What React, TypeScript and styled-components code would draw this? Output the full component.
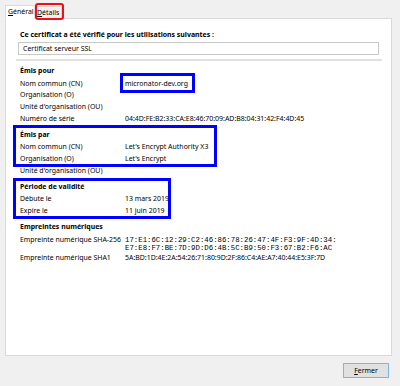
import styled, { createGlobalStyle } from 'styled-components';

const GlobalStyle = createGlobalStyle`
  html, body {
    margin: 0;
    padding: 0;
    background: #f0f0f0;
  }
  body {
    font-family: "Noto Sans", "Open Sans", sans-serif;
    font-size: 6.95px;
    color: #000;
  }
`;

type Field = { label: string; value: string; mono?: string[] };
type Group = { title: string; fields: Field[] };

const groups: Group[] = [
  {
    title: 'Émis pour',
    fields: [
      { label: 'Nom commun (CN)', value: 'micronator-dev.org' },
      { label: 'Organisation (O)', value: '' },
      { label: "Unité d'organisation (OU)", value: '' },
      { label: 'Numéro de série', value: '04:4D:FE:B2:33:CA:E8:46:70:09:AD:B8:04:31:42:F4:4D:45' },
    ],
  },
  {
    title: 'Émis par',
    fields: [
      { label: 'Nom commun (CN)', value: "Let's Encrypt Authority X3" },
      { label: 'Organisation (O)', value: "Let's Encrypt" },
      { label: "Unité d'organisation (OU)", value: '' },
    ],
  },
  {
    title: 'Période de validité',
    fields: [
      { label: 'Débute le', value: '13 mars 2019' },
      { label: 'Expire le', value: '11 juin 2019' },
    ],
  },
  {
    title: 'Empreintes numériques',
    fields: [
      {
        label: 'Empreinte numérique SHA-256',
        value: '',
        mono: [
          '17:E1:6C:12:29:C2:46:86:78:26:47:4F:F3:9F:4D:34:',
          'E7:E8:F7:BE:7D:9D:D6:4B:5C:B9:50:F3:67:B2:F6:AC',
        ],
      },
      { label: 'Empreinte numérique SHA1', value: '5A:BD:1D:4E:2A:54:26:71:80:9D:2F:86:C4:AE:A7:40:44:E5:3F:7D' },
    ],
  },
];

// annotation boxes drawn over the screenshot
const marks = [
  { left: 120, top: 73, width: 75, height: 20, color: '#0000ff', thick: 3, radius: 0 },
  { left: 13, top: 125, width: 204, height: 42, color: '#0000ff', thick: 3, radius: 0 },
  { left: 13, top: 178, width: 158, height: 41, color: '#0000ff', thick: 3, radius: 0 },
  { left: 35, top: 3, width: 29, height: 17, color: '#ee1111', thick: 2.5, radius: 3 },
];

function App() {
  return (
    <Page>
      <GlobalStyle />
      <TabBar>
        <Tab $active>
          <u>G</u>énéral
        </Tab>
        <Tab>
          <u>D</u>étails
        </Tab>
      </TabBar>
      <Panel>
        <Heading>Ce certificat a été vérifié pour les utilisations suivantes :</Heading>
        <UsageBox>Certificat serveur SSL</UsageBox>
        <Divider />
        {groups.map((g) => (
          <Section key={g.title}>
            <SectionTitle>{g.title}</SectionTitle>
            {g.fields.map((f) => (
              <Row key={f.label} $tall={!!f.mono}>
                <Label>{f.label}</Label>
                {f.mono ? (
                  <Mono>
                    {f.mono.map((line) => (
                      <div key={line}>{line}</div>
                    ))}
                  </Mono>
                ) : (
                  <Value>{f.value}</Value>
                )}
              </Row>
            ))}
          </Section>
        ))}
      </Panel>
      <Footer>
        <Button>
          <u>F</u>ermer
        </Button>
      </Footer>
      {marks.map((m, i) => (
        <Mark
          key={i}
          $color={m.color}
          $thick={m.thick}
          $radius={m.radius}
          style={{ left: m.left, top: m.top, width: m.width, height: m.height }}
        />
      ))}
    </Page>
  );
}

const Page = styled.div`
  position: relative;
  width: 400px;
  height: 386px;
  display: flex;
  flex-direction: column;
  overflow: hidden;
`;

const TabBar = styled.div`
  display: flex;
  align-items: flex-end;
  height: 14px;
  padding: 4px 0 0 5px;
  position: relative;
  z-index: 1;
`;

const Tab = styled.div<{ $active?: boolean }>`
  width: ${({ $active }) => ($active ? '30px' : '28px')};
  height: ${({ $active }) => ($active ? '14px' : '12px')};
  line-height: ${({ $active }) => ($active ? '12px' : '11px')};
  padding: 0 0 0 2px;
  box-sizing: border-box;
  background: ${({ $active }) => ($active ? '#fff' : '#f0f0f0')};
  border: 1px solid #d9d9d9;
  border-bottom: ${({ $active }) => ($active ? '1px solid #fff' : 'none')};
  margin-left: ${({ $active }) => ($active ? '0' : '-1px')};
  margin-bottom: ${({ $active }) => ($active ? '-1px' : '0')};
  u {
    text-decoration-thickness: 1px;
    text-underline-offset: 1px;
  }
`;

const Panel = styled.div`
  width: 387px;
  height: 338px;
  margin-left: 5px;
  box-sizing: border-box;
  background: #fff;
  border: 1px solid #d9d9d9;
  padding: 10px 9px 0 10px;
`;

const Heading = styled.div`
  font-weight: 700;
  line-height: 11px;
  padding-left: 4px;
`;

const UsageBox = styled.div`
  margin: 2px 3px 0 2px;
  height: 13px;
  box-sizing: border-box;
  border: 1px solid #c8c8c8;
  padding-left: 4px;
  line-height: 11px;
`;

const Divider = styled.div`
  margin-top: 4px;
  border-top: 2px solid #e0e0e0;
  margin-bottom: 4px;
`;

const Section = styled.div`
  padding-left: 4px;
  & + & {
    margin-top: 4.5px;
  }
`;

const SectionTitle = styled.div`
  font-weight: 700;
  line-height: 12.5px;
`;

const Row = styled.div<{ $tall?: boolean }>`
  display: grid;
  grid-template-columns: 105px 1fr;
  height: ${({ $tall }) => ($tall ? '18px' : '11.7px')};
  line-height: 11.7px;
`;

const Label = styled.div`
  white-space: nowrap;
`;

const Value = styled.div`
  white-space: nowrap;
`;

const Mono = styled.div`
  font-family: "Liberation Mono", "DejaVu Sans Mono", monospace;
  font-size: 7.35px;
  line-height: 8px;
  padding-top: 2px;
  white-space: pre;
`;

const Footer = styled.div`
  display: flex;
  justify-content: flex-end;
  padding: 7px 11px 0 0;
`;

const Button = styled.div`
  width: 46px;
  height: 15px;
  box-sizing: border-box;
  border: 1px solid #7eb4ea;
  background: #e1e1e1;
  text-align: center;
  line-height: 13px;
  u {
    text-underline-offset: 1px;
  }
`;

const Mark = styled.div<{ $color: string; $thick: number; $radius: number }>`
  position: absolute;
  z-index: 2;
  box-sizing: border-box;
  border: ${({ $thick, $color }) => `${$thick}px solid ${$color}`};
  border-radius: ${({ $radius }) => $radius}px;
  pointer-events: none;
`;

export default App;
